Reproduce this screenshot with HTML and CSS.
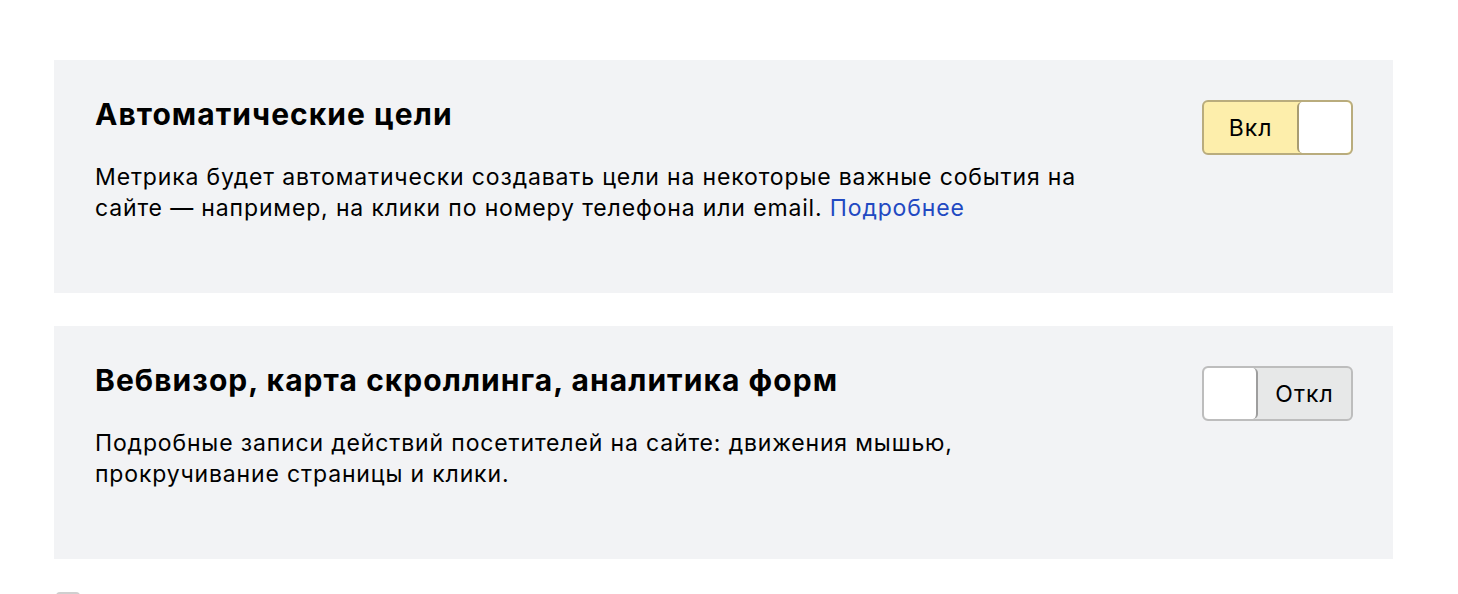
FILE: index.html
```html
<!DOCTYPE html>
<html lang="ru">
<head>
    <meta charset="UTF-8">
    <title>Настройки счётчика</title>
    <link rel="stylesheet" href="styles.css">
</head>
<body>
    <div class="page">
        <div class="panel">
            <div class="panel-text">
                <h2 class="panel-title">Автоматические цели</h2>
                <p class="panel-desc">Метрика будет автоматически создавать цели на некоторые важные события на сайте — например, на клики по номеру телефона или email. <a href="#" class="link">Подробнее</a></p>
            </div>
            <div class="toggle toggle-on">
                <span class="toggle-label">Вкл</span>
                <span class="toggle-knob"></span>
            </div>
        </div>

        <div class="panel">
            <div class="panel-text">
                <h2 class="panel-title">Вебвизор, карта скроллинга, аналитика форм</h2>
                <p class="panel-desc">Подробные записи действий посетителей на сайте: движения мышью, прокручивание страницы и клики.</p>
            </div>
            <div class="toggle toggle-off">
                <span class="toggle-knob"></span>
                <span class="toggle-label">Откл</span>
            </div>
        </div>

        <div class="checkbox"></div>
    </div>
</body>
</html>
```

FILE: styles.css
```css
body {
    margin: 0;
    background-color: #ffffff;
    color: #000000;
    font-family: Inter, "Noto Sans", Arial, sans-serif;
}

.page {
    padding: 60px 65px 0 54px;
    display: flex;
    flex-direction: column;
    gap: 33px;
}

.panel {
    background-color: #f2f3f5;
    height: 233px;
    box-sizing: border-box;
    padding: 40px 40px 0 41px;
    display: flex;
    justify-content: space-between;
    align-items: flex-start;
}

.panel-text {
    width: 1000px;
}

.panel-title {
    margin: 0;
    font-size: 30px;
    line-height: 28px;
    font-weight: 700;
    letter-spacing: 1.05px;
}

.panel-desc {
    margin: 34px 0 0 0;
    font-size: 23px;
    line-height: 31px;
    letter-spacing: 0.85px;
}

.link {
    color: #2249c2;
    text-decoration: none;
}

.toggle {
    display: flex;
    width: 151px;
    height: 55px;
    box-sizing: border-box;
    border-radius: 6px;
    border: 2px solid #b9b9b9;
    overflow: hidden;
    flex-shrink: 0;
}

.toggle-label {
    flex: 1;
    display: flex;
    align-items: center;
    justify-content: center;
    font-size: 23px;
    letter-spacing: 1px;
}

.toggle-knob {
    width: 52px;
    background-color: #ffffff;
    border-radius: 5px;
}

.toggle-on {
    background-color: #fdeeab;
    border-color: #b9ac7d;
}

.toggle-on .toggle-knob {
    border-left: 2px solid #a89c72;
}

.toggle-off {
    background-color: #e7e8e8;
    border-color: #bdbdbd;
}

.toggle-off .toggle-knob {
    border-right: 2px solid #9e9e9e;
}

.checkbox {
    width: 24px;
    height: 24px;
    margin-left: 2px;
    border-radius: 4px;
    background-color: #cfcfcf;
}
```
